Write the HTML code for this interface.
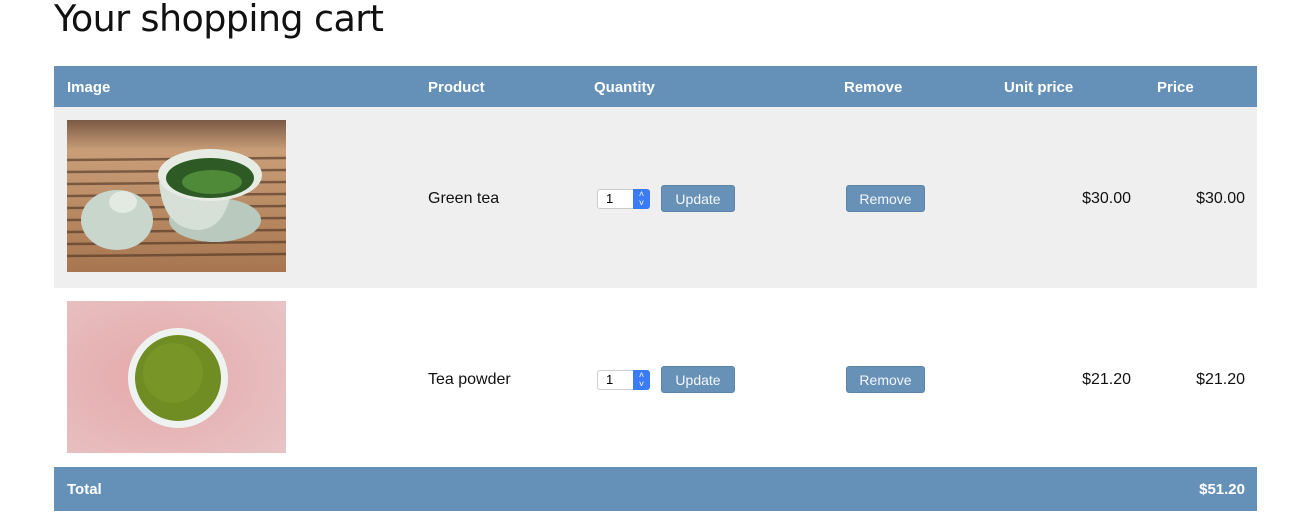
<!DOCTYPE html>
<html><head><style>
body{margin:0;width:1305px;height:525px;background:#fff;position:relative;overflow:hidden;font-family:"Liberation Sans",Arial,sans-serif;}
.a{position:absolute;}
h1{position:absolute;left:54px;top:-3px;margin:0;font-family:"DejaVu Sans","Liberation Sans",sans-serif;font-weight:normal;font-size:36.5px;letter-spacing:-0.6px;color:#111;}
.bar{background:#6591b8;left:54px;width:1203px;}
.th{color:#fff;font-weight:bold;font-size:15px;line-height:20px;}
.td{font-size:16px;color:#111;line-height:20px;}
.btn{background:#6791b6;color:#f4f7fa;font-size:14px;border-radius:3px;text-align:center;line-height:27px;height:27px;border:1px solid #5a84aa;box-sizing:border-box;}
.spin{width:53px;height:20px;background:#fff;border:1px solid #ccc;border-radius:3px;box-sizing:border-box;font-size:13px;line-height:18px;padding-left:8px;}
.spin i{position:absolute;right:-1px;top:-1px;width:17px;height:20px;background:#3b7cf5;border-radius:0 3px 3px 0;color:#fff;font-style:normal;font-size:9px;line-height:9px;text-align:center;padding-top:1px;box-sizing:border-box;}
.r{text-align:right;}
</style></head><body>
<h1>Your shopping cart</h1>
<div class="a bar" style="top:66px;height:41px"></div>
<div class="a th" style="left:67px;top:78px">Image</div>
<div class="a th" style="left:428px;top:78px">Product</div>
<div class="a th" style="left:594px;top:78px">Quantity</div>
<div class="a th" style="left:844px;top:78px">Remove</div>
<div class="a th" style="left:1004px;top:78px">Unit price</div>
<div class="a th" style="left:1157px;top:78px">Price</div>

<div class="a" style="left:54px;top:107px;width:1203px;height:181px;background:#efefef"></div>
<svg class="a" style="left:67px;top:120px" width="219" height="152" viewBox="0 0 219 152">
<defs><linearGradient id="w" x1="0" y1="0" x2="0" y2="1"><stop offset="0" stop-color="#7a5a44"/><stop offset="0.2" stop-color="#c99e78"/><stop offset="1" stop-color="#a77650"/></linearGradient></defs>
<rect width="219" height="152" fill="url(#w)"/>
<g stroke="#4a3222" stroke-width="2.5" opacity="0.6">
<line x1="0" y1="40" x2="219" y2="38"/><line x1="0" y1="52" x2="219" y2="50"/><line x1="0" y1="64" x2="219" y2="62"/><line x1="0" y1="76" x2="219" y2="74"/><line x1="0" y1="88" x2="219" y2="86"/><line x1="0" y1="100" x2="219" y2="98"/><line x1="0" y1="112" x2="219" y2="110"/><line x1="0" y1="124" x2="219" y2="122"/><line x1="0" y1="136" x2="219" y2="134"/></g>
<ellipse cx="148" cy="100" rx="46" ry="22" fill="#b9c9bd"/>
<path d="M92 62 Q96 108 130 110 Q160 110 166 62 Z" fill="#d6e0d6"/>
<ellipse cx="143" cy="55" rx="52" ry="26" fill="#e6ece4"/>
<ellipse cx="143" cy="58" rx="44" ry="20" fill="#2e5a25"/>
<ellipse cx="145" cy="62" rx="30" ry="12" fill="#4e8a38"/>
<ellipse cx="50" cy="100" rx="36" ry="30" fill="#c8d6cb"/>
<ellipse cx="56" cy="82" rx="14" ry="11" fill="#e2eae2"/>
</svg>
<div class="a td" style="left:428px;top:189px">Green tea</div>
<div class="a spin" style="left:597px;top:189px">1<i>˄<br>˅</i></div>
<div class="a btn" style="left:661px;top:185px;width:74px">Update</div>
<div class="a btn" style="left:846px;top:185px;width:79px">Remove</div>
<div class="a td r" style="left:1031px;width:100px;top:189px">$30.00</div>
<div class="a td r" style="left:1145px;width:100px;top:189px">$30.00</div>

<svg class="a" style="left:67px;top:301px" width="219" height="152" viewBox="0 0 219 152">
<defs><radialGradient id="p" cx="0.4" cy="0.5" r="0.8"><stop offset="0" stop-color="#e5a9aa"/><stop offset="1" stop-color="#e8c4c6"/></radialGradient></defs>
<rect width="219" height="152" fill="url(#p)"/>
<circle cx="111" cy="77" r="50" fill="#eef3f2"/>
<circle cx="111" cy="77" r="43" fill="#6f8d22"/>
<circle cx="106" cy="72" r="30" fill="#7a9a2a" opacity="0.7"/>
</svg>
<div class="a td" style="left:428px;top:370px">Tea powder</div>
<div class="a spin" style="left:597px;top:370px">1<i>˄<br>˅</i></div>
<div class="a btn" style="left:661px;top:366px;width:74px">Update</div>
<div class="a btn" style="left:846px;top:366px;width:79px">Remove</div>
<div class="a td r" style="left:1031px;width:100px;top:370px">$21.20</div>
<div class="a td r" style="left:1145px;width:100px;top:370px">$21.20</div>

<div class="a bar" style="top:467px;height:44px"></div>
<div class="a th" style="left:67px;top:480px">Total</div>
<div class="a th r" style="left:1145px;width:100px;top:480px">$51.20</div>
</body></html>
